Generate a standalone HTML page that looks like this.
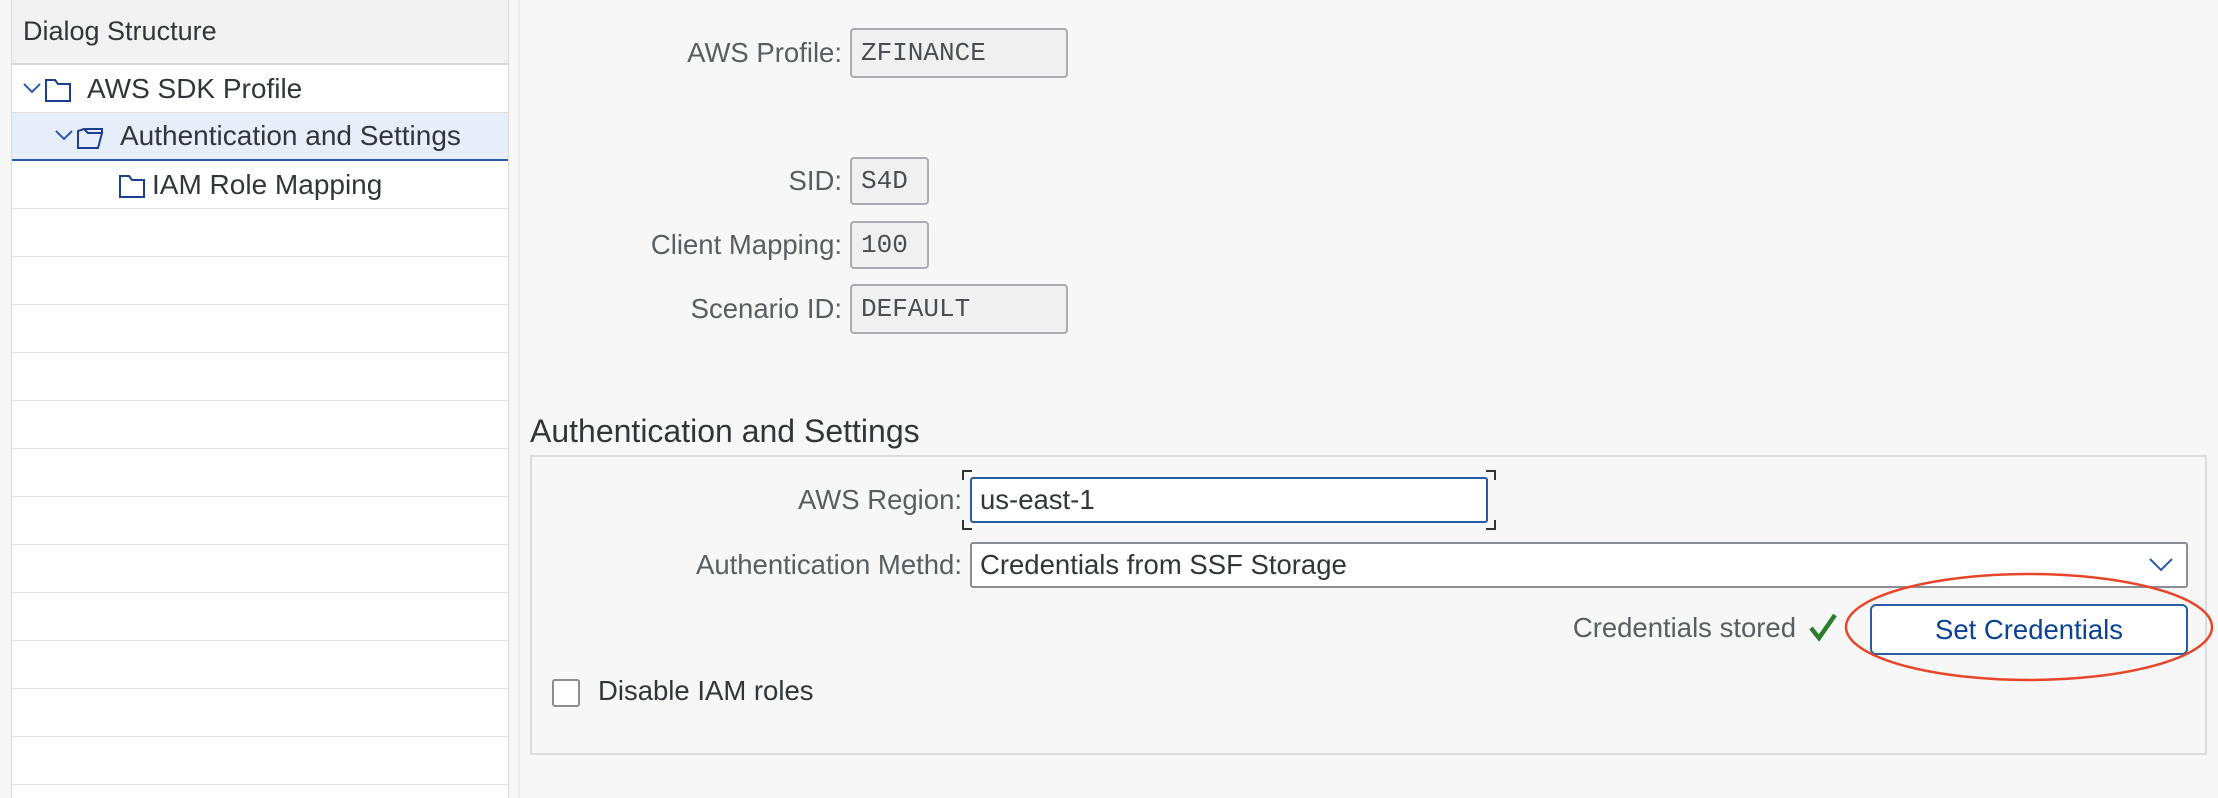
<!DOCTYPE html>
<html><head><meta charset="utf-8"><style>
*{box-sizing:border-box;margin:0;padding:0}
html,body{width:2218px;height:798px;overflow:hidden}
body{background:#f7f7f7;font-family:"Liberation Sans",sans-serif;position:relative;color:#32363a}
.a{position:absolute}
.lbl{position:absolute;font-size:27.5px;color:#595e63;text-align:right;white-space:nowrap;height:48px;display:flex;align-items:center}
.ro{position:absolute;background:#f0f0f0;border:2px solid #a9adb1;border-radius:4px;font-family:"Liberation Mono",monospace;font-size:26px;color:#4a4e52;padding-left:9px;display:flex;align-items:center}
.row{position:absolute;left:12px;width:496px;height:48px;border-bottom:1px solid #e1e1e1;background:#fff;font-size:28px;color:#32363a;display:flex;align-items:center}
</style></head><body>
<div class="a" style="left:11px;top:0;width:498px;height:798px;background:#fff;border-left:2px solid #d9d9d9;border-right:2px solid #d9d9d9"></div>
<div class="a" style="left:12px;top:0;width:496px;height:65px;background:#f2f2f2;border-bottom:2px solid #d9d9d9;font-size:27px;padding-left:11px;display:flex;align-items:center">Dialog Structure</div>
<div class="row" style="top:65px;padding-left:10px">
<svg width="62" height="30" viewBox="0 0 62 30"><path d="M2 10 L10 18 L18 10" fill="none" stroke="#2a5bb0" stroke-width="2"/><path d="M24 6 H33 L36 10 H48 V27 H24 Z" fill="none" stroke="#1d3f92" stroke-width="2"/></svg>
<span style="margin-left:3px">AWS SDK Profile</span></div>
<div class="row" style="top:113px;background:#e5eef9;border-bottom:2px solid #2a5ba8;padding-left:42px">
<svg width="64" height="30" viewBox="0 0 64 30"><path d="M2 10 L10 18 L18 10" fill="none" stroke="#2a5bb0" stroke-width="2"/><path d="M24 10 V27 H44 L48 12 H34 L30 8 Z M30 8 H48 V12" fill="none" stroke="#1d3f92" stroke-width="2"/></svg>
<span style="margin-left:2px">Authentication and Settings</span></div>
<div class="row" style="top:161px;padding-left:104px">
<svg width="30" height="30" viewBox="0 0 30 30"><path d="M4 6 H13 L16 10 H28 V27 H4 Z" fill="none" stroke="#1d3f92" stroke-width="2"/></svg>
<span style="margin-left:6px">IAM Role Mapping</span></div>
<div class="row" style="top:209px"></div><div class="row" style="top:257px"></div><div class="row" style="top:305px"></div><div class="row" style="top:353px"></div><div class="row" style="top:401px"></div><div class="row" style="top:449px"></div><div class="row" style="top:497px"></div><div class="row" style="top:545px"></div><div class="row" style="top:593px"></div><div class="row" style="top:641px"></div><div class="row" style="top:689px"></div><div class="row" style="top:737px"></div><div class="row" style="top:785px;height:13px;border-bottom:none"></div>
<div class="a" style="left:518px;top:0;width:2px;height:798px;background:#ececec"></div>

<div class="lbl" style="right:1376px;top:29px">AWS Profile:</div>
<div class="ro" style="left:850px;top:28px;width:218px;height:50px">ZFINANCE</div>
<div class="lbl" style="right:1376px;top:157px">SID:</div>
<div class="ro" style="left:850px;top:157px;width:79px;height:48px">S4D</div>
<div class="lbl" style="right:1376px;top:221px">Client Mapping:</div>
<div class="ro" style="left:850px;top:221px;width:79px;height:48px">100</div>
<div class="lbl" style="right:1376px;top:285px">Scenario ID:</div>
<div class="ro" style="left:850px;top:284px;width:218px;height:50px">DEFAULT</div>

<div class="a" style="left:530px;top:413px;font-size:32px;color:#32363a">Authentication and Settings</div>
<div class="a" style="left:530px;top:455px;width:1677px;height:300px;border:2px solid #dcdcdc"></div>
<div class="lbl" style="right:1256px;top:476px">AWS Region:</div>
<div class="a" style="left:962px;top:470px;width:534px;height:60px;border:2px solid #333;clip-path:polygon(0 0,10px 0,10px 2px,2px 2px,2px 10px,0 10px,0 calc(100% - 10px),2px calc(100% - 10px),2px calc(100% - 2px),10px calc(100% - 2px),10px 100%,0 100%,0 0,100% 0,100% 100%,calc(100% - 10px) 100%,calc(100% - 10px) calc(100% - 2px),calc(100% - 2px) calc(100% - 2px),calc(100% - 2px) calc(100% - 10px),100% calc(100% - 10px),100% 10px,calc(100% - 2px) 10px,calc(100% - 2px) 2px,calc(100% - 10px) 2px,calc(100% - 10px) 0)"></div>
<div class="a" style="left:970px;top:477px;width:518px;height:46px;background:#fff;border:2px solid #2a5ba8;border-radius:3px;font-size:27.5px;color:#32363a;padding-left:8px;display:flex;align-items:center">us-east-1</div>
<div class="lbl" style="right:1256px;top:541px">Authentication Methd:</div>
<div class="a" style="left:970px;top:542px;width:1218px;height:46px;background:#fff;border:2px solid #8a8e92;border-radius:3px;font-size:27.5px;color:#32363a;padding-left:8px;display:flex;align-items:center">Credentials from SSF Storage</div>
<svg class="a" style="left:2148px;top:555px" width="26" height="20" viewBox="0 0 26 20"><path d="M2 4 L13 15 L24 4" fill="none" stroke="#2a5bb0" stroke-width="2"/></svg>
<div class="lbl" style="right:422px;top:604px">Credentials stored</div>
<svg class="a" style="left:1808px;top:612px" width="30" height="30" viewBox="0 0 30 30"><path d="M3 16 L11 26 L27 3" fill="none" stroke="#2b7c2b" stroke-width="4.5"/></svg>
<div class="a" style="left:1870px;top:604px;width:318px;height:51px;background:#fff;border:2px solid #2a5ba8;border-radius:6px;font-size:27.5px;color:#0b4294;display:flex;align-items:center;justify-content:center">Set Credentials</div>
<svg class="a" style="left:1840px;top:568px" width="378" height="118" viewBox="0 0 378 118"><ellipse cx="189" cy="59" rx="183" ry="53" fill="none" stroke="#e8462a" stroke-width="2.5"/></svg>
<div class="a" style="left:552px;top:679px;width:28px;height:28px;background:#fff;border:2px solid #8a8e92;border-radius:3px"></div>
<div class="a" style="left:598px;top:675px;font-size:27.5px;color:#32363a">Disable IAM roles</div>
</body></html>
